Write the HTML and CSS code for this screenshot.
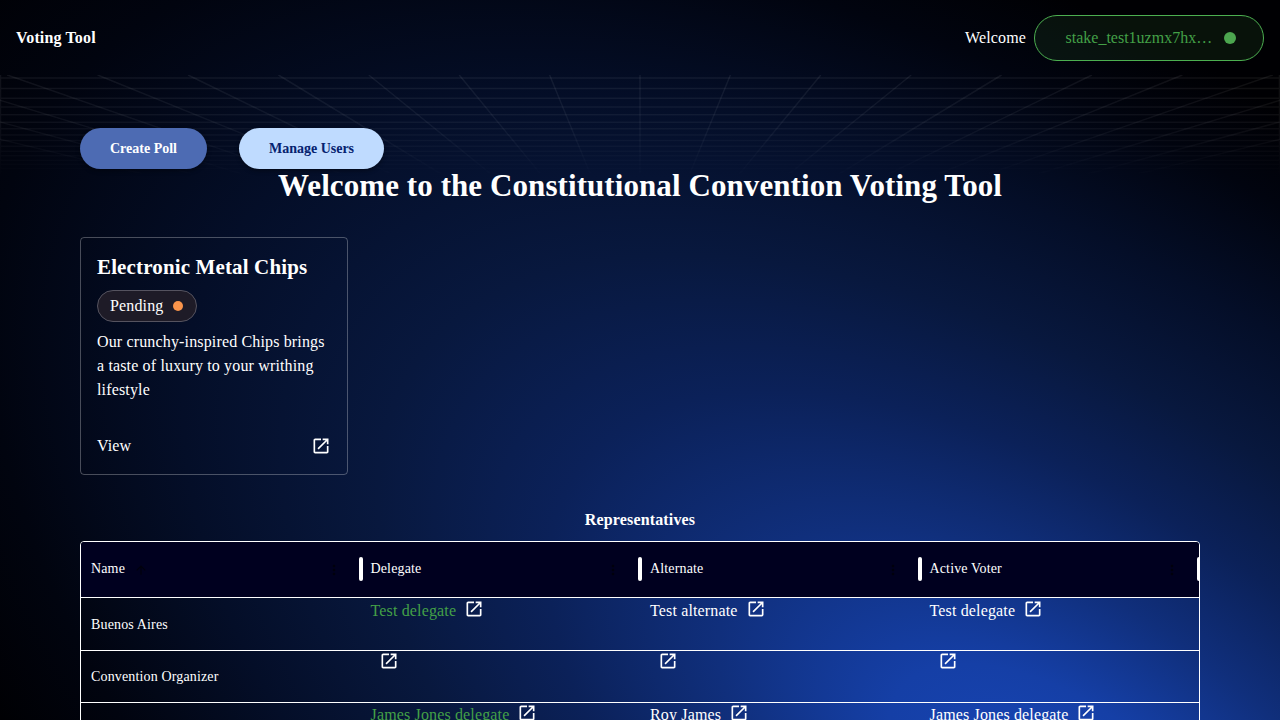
FILE: index.html
```html
<!DOCTYPE html>
<html lang="en">
<head>
<meta charset="utf-8">
<title>Voting Tool</title>
<link rel="stylesheet" href="styles.css">
</head>
<body>
<svg class="backdrop" viewBox="0 0 1280 720" aria-hidden="true">
  <defs>
    <radialGradient id="glow" gradientUnits="userSpaceOnUse" cx="0" cy="0" r="1" gradientTransform="translate(1060 800) rotate(34) scale(1390 705)">
      <stop offset="0" stop-color="#1846b8"/>
      <stop offset=".14" stop-color="#153fa6"/>
      <stop offset=".28" stop-color="#102f7c"/>
      <stop offset=".42" stop-color="#0b2159"/>
      <stop offset=".56" stop-color="#08183e"/>
      <stop offset=".72" stop-color="#040e28"/>
      <stop offset=".88" stop-color="#01040f"/>
      <stop offset="1" stop-color="#000003"/>
    </radialGradient>
    <linearGradient id="fade" x1="0" y1="75" x2="0" y2="180" gradientUnits="userSpaceOnUse">
      <stop offset="0" stop-color="#fff"/><stop offset=".5" stop-color="#bbb"/><stop offset="1" stop-color="#000"/>
    </linearGradient>
    <mask id="gridMask" maskUnits="userSpaceOnUse" x="0" y="75" width="1280" height="110"><rect y="75" width="1280" height="110" fill="url(#fade)"/></mask>
    <symbol id="launch" viewBox="0 0 24 24"><path d="M19 19H5V5h7V3H5c-1.11 0-2 .9-2 2v14c0 1.1.89 2 2 2h14c1.1 0 2-.9 2-2v-7h-2v7zM14 3v2h3.590l-9.830 9.830 1.410 1.410L19 6.410V10h2V3h-7z"/></symbol>
    <symbol id="more" viewBox="0 0 24 24"><path d="M12 8c1.100 0 2-.9 2-2s-.9-2-2-2-2 .9-2 2 .9 2 2 2zm0 2c-1.100 0-2 .9-2 2s.9 2 2 2 2-.9 2-2-.9-2-2-2zm0 6c-1.100 0-2 .9-2 2s.9 2 2 2 2-.9 2-2-.9-2-2-2z"/></symbol>
  </defs>
  <rect width="1280" height="720" fill="url(#glow)"/>
  <g mask="url(#gridMask)" class="grid-lines">
    <path d="M0 78H1280M0 88.500H1280M0 98.300H1280M0 107H1280M0 114.700H1280M0 122.300H1280M0 128.700H1280M0 135H1280M0 140.500H1280M0 146.300H1280M0 151.300H1280M0 155.700H1280M0 160.300H1280M0 164.300H1280M0 168.300H1280M0 172H1280M.5 75V180M1279.500 75V180"/>
    <path d="M640 295V75M640 295L549.600 75M640 295L459.200 75M640 295L368.800 75M640 295L278.400 75M640 295L188 75M640 295L97.600 75M640 295L7.200 75M640 295L-83.200 75M640 295L-173.600 75M640 295L-264 75M640 295L730.400 75M640 295L820.800 75M640 295L911.200 75M640 295L1001.600 75M640 295L1092 75M640 295L1182.400 75M640 295L1272.800 75M640 295L1363.200 75M640 295L1453.600 75M640 295L1544 75"/>
  </g>
</svg>

<div class="page">
  <header class="topbar">
    <span class="brand">Voting Tool</span>
    <div class="account">
      <span>Welcome</span>
      <div class="wallet"><span class="stake">stake_test1uzmx7hx…</span><i class="dot"></i></div>
    </div>
  </header>

  <main>
    <div class="actions">
      <button class="btn btn-primary">Create Poll</button>
      <button class="btn btn-secondary">Manage Users</button>
    </div>
    <h1>Welcome to the Constitutional Convention Voting Tool</h1>

    <article class="card">
      <h2>Electronic Metal Chips</h2>
      <div class="chip">Pending<i class="chip-dot"></i></div>
      <p>Our crunchy-inspired Chips brings a taste of luxury to your writhing lifestyle</p>
      <div class="card-footer"><span>View</span><svg class="icon"><use href="#launch"/></svg></div>
    </article>

    <h3>Representatives</h3>
    <section class="table">
      <div class="row head">
        <div class="cell">Name<svg class="sort" viewBox="0 0 24 24"><path d="M4 12l1.410 1.410L11 7.830V20h2V7.830l5.580 5.590L20 12l-8-8-8 8z"/></svg><svg class="menu"><use href="#more"/></svg><i class="sep"></i></div>
        <div class="cell">Delegate<svg class="menu"><use href="#more"/></svg><i class="sep"></i></div>
        <div class="cell">Alternate<svg class="menu"><use href="#more"/></svg><i class="sep"></i></div>
        <div class="cell">Active Voter<svg class="menu"><use href="#more"/></svg><i class="sep"></i></div>
      </div>
      <div class="row first">
        <div class="cell">Buenos Aires</div>
        <div class="person active">Test delegate<svg class="icon"><use href="#launch"/></svg></div>
        <div class="person">Test alternate<svg class="icon"><use href="#launch"/></svg></div>
        <div class="person">Test delegate<svg class="icon"><use href="#launch"/></svg></div>
      </div>
      <div class="row">
        <div class="cell">Convention Organizer</div>
        <div class="person"><svg class="icon"><use href="#launch"/></svg></div>
        <div class="person"><svg class="icon"><use href="#launch"/></svg></div>
        <div class="person"><svg class="icon"><use href="#launch"/></svg></div>
      </div>
      <div class="row">
        <div class="cell"></div>
        <div class="person active">James Jones delegate<svg class="icon"><use href="#launch"/></svg></div>
        <div class="person">Roy James<svg class="icon"><use href="#launch"/></svg></div>
        <div class="person">James Jones delegate<svg class="icon"><use href="#launch"/></svg></div>
      </div>
    </section>
  </main>
</div>
</body>
</html>
```
FILE: styles.css
```css
* { box-sizing: border-box; }
body {
  margin: 0;
  height: 720px;
  overflow: hidden;
  background: #000;
  color: #fff;
  font: 16px/24px "Liberation Serif", "Times New Roman", serif;
  letter-spacing: 0.15px;
}
h1, h2, h3, p { margin: 0; }
.backdrop { position: absolute; top: 0; left: 0; width: 1280px; height: 720px; z-index: -1; }
.grid-lines { stroke: #fff; stroke-opacity: .065; stroke-width: 1.5; fill: none; }
.page { height: 720px; overflow: hidden; }
.topbar { display: flex; align-items: center; justify-content: space-between; height: 76px; padding: 0 16px; }
.brand { font-weight: 700; }
.account { display: flex; align-items: center; gap: 8px; }
.wallet {
  display: flex;
  align-items: center;
  justify-content: space-between;
  width: 230px;
  height: 46px;
  padding: 0 27px 0 30.5px;
  border: 1px solid #4caf50;
  border-radius: 23px;
  background: rgba(76, 175, 80, .1);
  color: #43a047;
}
.stake { letter-spacing: 0; }
.dot { width: 12px; height: 12px; border-radius: 50%; background: #4ca64f; }
main { padding: 52px 80px 0; }
.actions { display: flex; gap: 32px; height: 41px; }
.btn {
  height: 41px;
  padding: 0;
  border: 0;
  border-radius: 21px;
  font: 700 14px/24px "Liberation Serif", "Times New Roman", serif;
  white-space: nowrap;
  box-shadow: 0 2px 4px rgba(0, 0, 0, .35);
}
.btn-primary { width: 127px; background: #4d6bb3; color: #fff; }
.btn-secondary { width: 145px; background: #bfdbff; color: #05226f; }
h1 { font-size: 31px; line-height: 34px; text-align: center; letter-spacing: 0.08px; }
.card {
  display: flex;
  flex-direction: column;
  width: 268px;
  height: 238px;
  margin-top: 34px;
  padding: 15px 16px 16px;
  border: 1px solid rgba(255, 255, 255, .28);
  border-radius: 4px;
}
.card h2 { font-size: 21px; line-height: 28px; letter-spacing: 0.14px; }
.chip {
  display: flex;
  align-items: center;
  gap: 9px;
  width: 100px;
  height: 32px;
  margin: 9px 0 8px;
  padding-left: 12px;
  border: 1px solid #55535f;
  border-radius: 16px;
  background: #1e1b27;
}
.chip-dot { width: 10px; height: 10px; border-radius: 50%; background: #f9944b; }
.card-footer { display: flex; align-items: center; justify-content: space-between; margin-top: auto; }
.icon { width: 20px; height: 20px; fill: currentColor; }
h3 { margin-top: 33px; font-size: 16px; line-height: 24px; text-align: center; }
.table { margin-top: 9px; border: 1px solid #fff; border-radius: 4px; overflow: hidden; height: 400px; }
.row { display: grid; grid-template-columns: repeat(4, 279.5px); height: 52px; border-bottom: 1px solid #fff; }
.row.head { height: 56px; background: #00001f; }
.row.first { height: 53px; }
.cell { display: flex; align-items: center; padding-left: 10px; font-size: 14px; }
.first .cell { padding-top: 1px; }
.head .cell { position: relative; padding-bottom: 2px; }
.sort { width: 14px; height: 14px; margin-left: 9px; margin-top: 3px; fill: #00000c; }
.menu { width: 16px; height: 16px; margin-left: auto; margin-right: 19px; margin-top: 3px; fill: #00000c; }
.sep { position: absolute; right: -2px; top: 15px; width: 4px; height: 24px; border-radius: 2px; background: #fff; }
.person { display: flex; align-items: flex-start; padding: 0 0 0 10px; }
.first .person { padding-top: 1px; }
.person .icon { margin-left: 8px; fill: #fff; }
.person.active { color: #43a047; }
```
